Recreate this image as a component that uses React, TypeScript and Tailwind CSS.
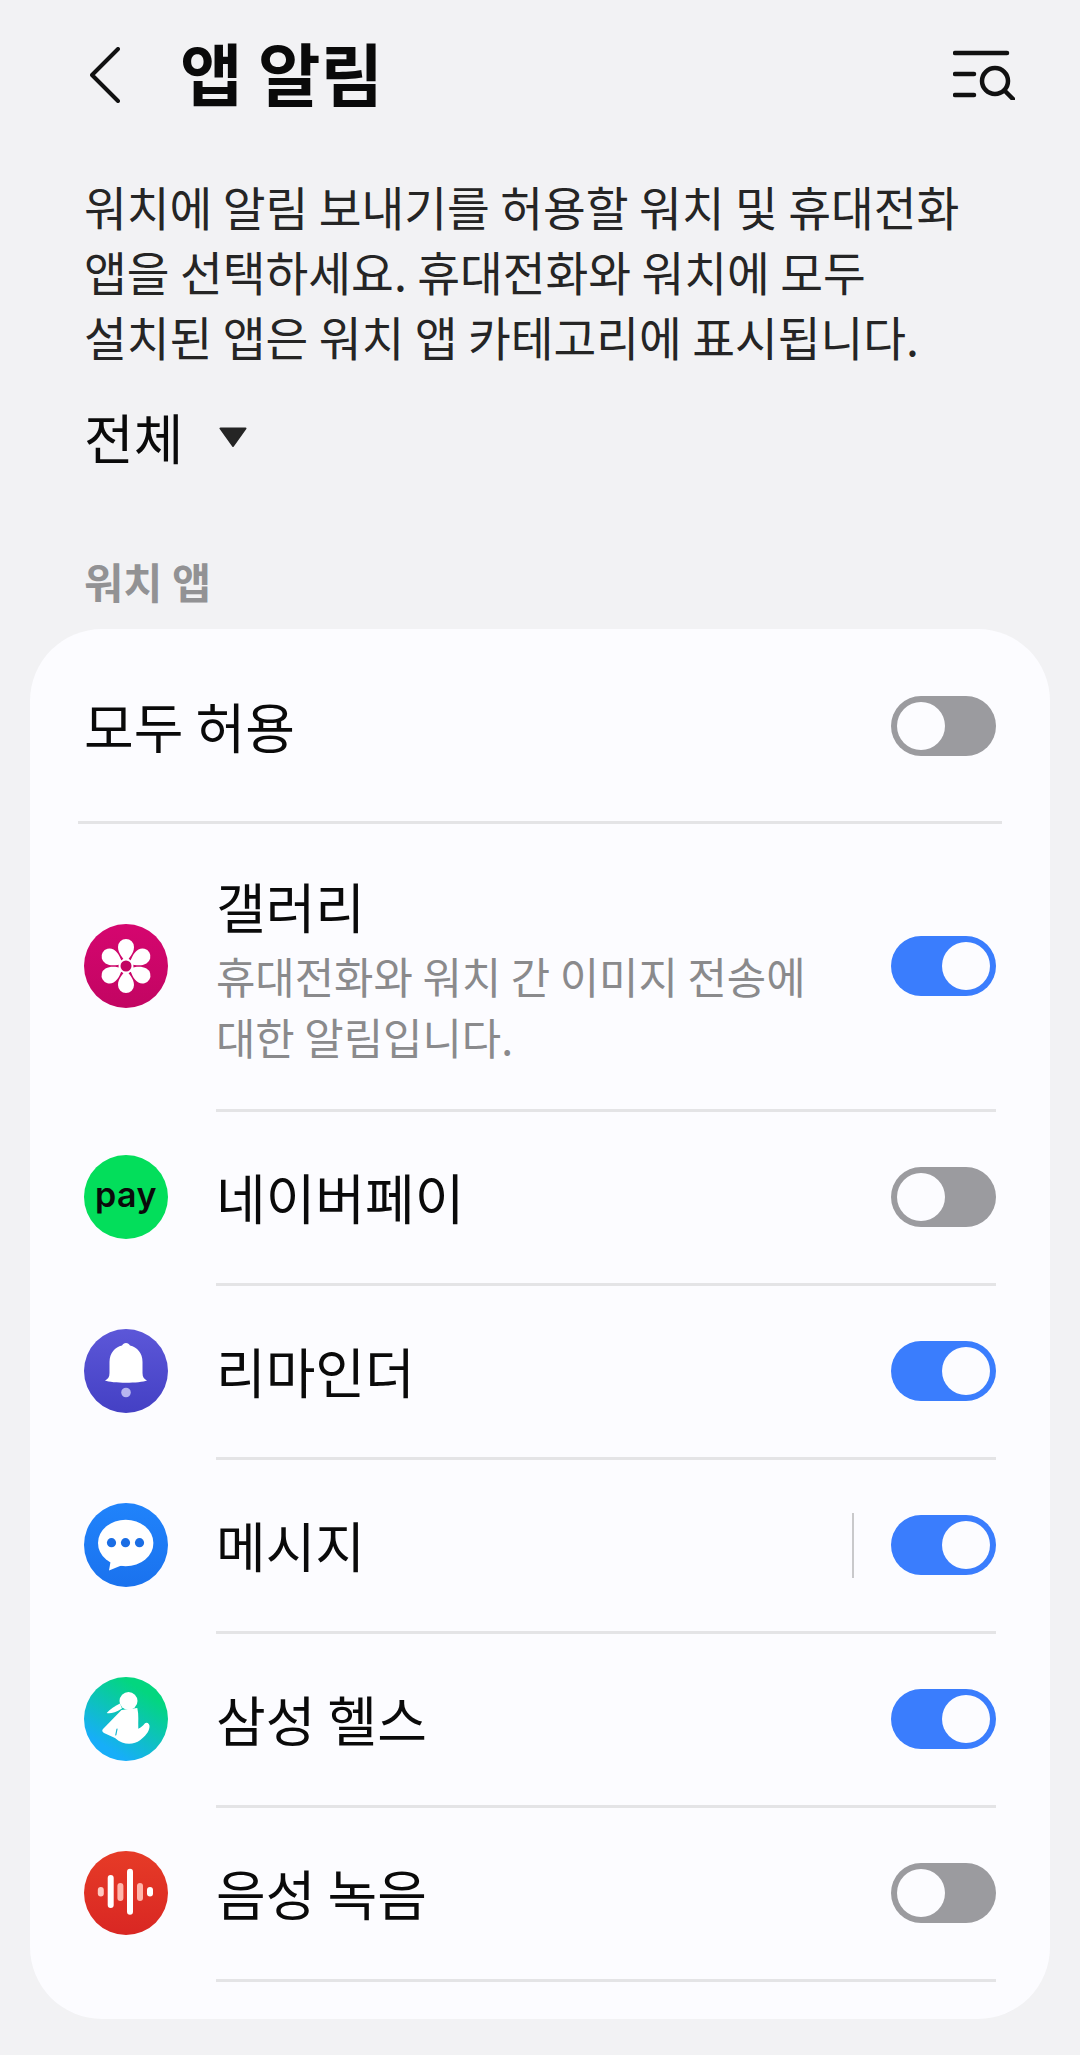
import React from "react";

function Toggle({ on }: { on: boolean }) {
  return (
    <div
      className={`flex h-[60px] w-[105px] shrink-0 items-center rounded-full p-[6px] ${
        on ? "justify-end bg-[#3a7dfd]" : "justify-start bg-[#9b9b9f]"
      }`}
    >
      <div className="h-[48px] w-[48px] rounded-full bg-[#fcfcff]" />
    </div>
  );
}

function GalleryIcon() {
  return (
    <svg viewBox="0 0 84 84" className="h-[84px] w-[84px]">
      <defs>
        <linearGradient id="gal" x1="0" y1="0" x2="0" y2="1">
          <stop offset="0" stopColor="#d5066f" />
          <stop offset="1" stopColor="#c20562" />
        </linearGradient>
      </defs>
      <circle cx="42" cy="42" r="42" fill="url(#gal)" />
      <g transform="translate(42 42)" fill="#fff">
        {[0, 60, 120, 180, 240, 300].map((a) => (
          <path
            key={a}
            transform={`rotate(${a})`}
            d="M0 -3 C-2.5 -8 -8 -12 -8 -19 A8 8 0 0 1 8 -19 C8 -12 2.5 -8 0 -3Z"
          />
        ))}
        <circle r="7.5" />
        <circle r="5.5" fill="#c20562" />
      </g>
    </svg>
  );
}

function PayIcon() {
  return (
    <div className="flex h-[84px] w-[84px] items-center justify-center rounded-full bg-[#03de5b]">
      <span className="pb-[4px] font-['Inter',sans-serif] text-[34px] font-semibold leading-none tracking-[0.5px] text-[#0a0a0a]">
        pay
      </span>
    </div>
  );
}

function BellIcon() {
  return (
    <svg viewBox="0 0 84 84" className="h-[84px] w-[84px]">
      <defs>
        <linearGradient id="bell" x1="0" y1="0" x2="0" y2="1">
          <stop offset="0" stopColor="#5c57d8" />
          <stop offset="1" stopColor="#4440c4" />
        </linearGradient>
      </defs>
      <circle cx="42" cy="42" r="42" fill="url(#bell)" />
      <path
        fill="#fff"
        d="M42 14c-2 0-3 1-4 2.5C31 18 25.5 24 25.5 33L25.5 44C25.5 48 24 50 21 51.5C28 54.5 56 54.5 63 51.5C60 50 58.5 48 58.5 44L58.5 33C58.5 24 53 18 46 16.5C45 15 44 14 42 14Z"
      />
      <circle cx="42" cy="63.5" r="4.8" fill="#b7b5f0" />
    </svg>
  );
}

function MessageIcon() {
  return (
    <svg viewBox="0 0 84 84" className="h-[84px] w-[84px]">
      <defs>
        <linearGradient id="msg" x1="0" y1="0" x2="0" y2="1">
          <stop offset="0" stopColor="#2083fb" />
          <stop offset="1" stopColor="#1a72ee" />
        </linearGradient>
      </defs>
      <circle cx="42" cy="42" r="42" fill="url(#msg)" />
      <ellipse cx="41.7" cy="40" rx="27.7" ry="23.2" fill="#fff" />
      <path d="M27 56 L25 67.5 L41 61Z" fill="#fff" />
      <g fill="#1a6de4">
        <circle cx="27.5" cy="39.7" r="4.6" />
        <circle cx="41.5" cy="39.7" r="4.6" />
        <circle cx="55.5" cy="39.7" r="4.6" />
      </g>
    </svg>
  );
}

function HealthIcon() {
  return (
    <svg viewBox="0 0 84 84" className="h-[84px] w-[84px]">
      <defs>
        <linearGradient id="health" x1="0.25" y1="0.95" x2="0.8" y2="0.1">
          <stop offset="0.1" stopColor="#17aef8" />
          <stop offset="0.9" stopColor="#03d67f" />
        </linearGradient>
      </defs>
      <circle cx="42" cy="42" r="42" fill="url(#health)" />
      <g fill="#fff">
        <circle cx="44.5" cy="24" r="9" />
        <path d="M36 26.5 C31 29 26 32 22.7 36 C25.5 37 31 36 38 31.5Z" />
        {/* torso and both arms */}
        <path d="M37.5 33 L53.3 31 C55 38 54 45 54.3 51.7 C57 50.5 59 49 60.5 46.8 C62.5 44.5 66 46.5 65.5 50 C65 55 61 59.5 56 63.3 C50 67.5 40 69 31 61 L20 56 C18 55 17.8 53 19 52 Z" />
      </g>
      <path d="M31.8 58 L33 52" stroke="#16b4cf" strokeWidth="1.2" strokeLinecap="round" />
    </svg>
  );
}

function VoiceIcon() {
  return (
    <svg viewBox="0 0 84 84" className="h-[84px] w-[84px]">
      <defs>
        <linearGradient id="voice" x1="0" y1="0" x2="0" y2="1">
          <stop offset="0" stopColor="#e63b27" />
          <stop offset="1" stopColor="#d92723" />
        </linearGradient>
      </defs>
      <circle cx="42" cy="42" r="42" fill="url(#voice)" />
      <rect x="13.8" y="36" width="6" height="9.5" rx="3" fill="#ffc9c0" />
      <rect x="23.7" y="24" width="6" height="33" rx="3" fill="#fff" />
      <rect x="33.4" y="32" width="6" height="18" rx="3" fill="#ffb6ab" />
      <rect x="43" y="17.7" width="6" height="46" rx="3" fill="#fff" />
      <rect x="53" y="32" width="6" height="18" rx="3" fill="#ffb6ab" />
      <rect x="63" y="36" width="6" height="9.5" rx="3" fill="#fff" />
    </svg>
  );
}

const apps = [
  { name: "네이버페이", icon: <PayIcon />, on: false },
  { name: "리마인더", icon: <BellIcon />, on: true },
  { name: "메시지", icon: <MessageIcon />, on: true, split: true },
  { name: "삼성 헬스", icon: <HealthIcon />, on: true },
  { name: "음성 녹음", icon: <VoiceIcon />, on: false },
];

export default function App() {
  return (
    <div className="min-h-screen bg-[#f2f2f4] font-['Noto_Sans_CJK_KR','Liberation_Sans',sans-serif] text-[#0a0a0a]">
      {/* top bar */}
      <div className="flex h-[150px] items-center pl-[90px] pr-[65px]">
        <svg viewBox="0 0 30 56" className="h-[56px] w-[30px]" fill="none" stroke="#111" strokeWidth="4" strokeLinecap="round" strokeLinejoin="round">
          <path d="M28 2 L2 28 L28 54" />
        </svg>
        <h1 className="ml-[60px] pb-[6px] text-[68px] font-bold leading-none">앱 알림</h1>
        <svg viewBox="0 0 62 50" className="ml-auto h-[50px] w-[62px]" fill="none" stroke="#111" strokeWidth="4.5" strokeLinecap="round">
          <path d="M2 3 H54" />
          <path d="M2 24 H21" />
          <path d="M2 45 H21" />
          <circle cx="42" cy="31" r="13" />
          <path d="M52 41 L60 49" />
        </svg>
      </div>

      <p className="ml-[84px] mt-[23px] whitespace-nowrap text-[46.5px] leading-[65px] text-[#252525]">
        워치에 알림 보내기를 허용할 워치 및 휴대전화
        <br />
        앱을 선택하세요. 휴대전화와 워치에 모두
        <br />
        설치된 앱은 워치 앱 카테고리에 표시됩니다.
      </p>

      <div className="ml-[84px] mt-[34px] flex h-[70px] items-center">
        <span className="text-[54px] leading-[70px]">전체</span>
        <svg viewBox="0 0 28 20" className="ml-[36px] h-[20px] w-[28px]">
          <path d="M1.5 1.5 H26.5 L14 19Z" fill="#252525" stroke="#252525" strokeWidth="2" strokeLinejoin="round" />
        </svg>
      </div>

      <div className="ml-[84px] mt-[79px] text-[42.6px] font-bold leading-[60px] text-[#929294]">워치 앱</div>

      {/* app list card; row dividers straddle the row boundary */}
      <div className="mx-[30px] mt-[18px] h-[1390px] rounded-[72px] bg-[#fcfcff]">
        <div className="mx-[48px] -mb-[2px] flex h-[195px] items-center justify-between border-b-[3px] border-[#e4e4e6] px-[6px] pt-[1px]">
          <span className="text-[54px] leading-none">모두 허용</span>
          <Toggle on={false} />
        </div>

        <div className="flex h-[288px] px-[54px]">
          <div className="self-center">
            <GalleryIcon />
          </div>
          <div className="-mb-[2px] ml-[48px] flex flex-1 items-center justify-between border-b-[3px] border-[#e4e4e6] pt-[1px]">
            <div className="pt-[8px]">
              <div className="text-[54px] leading-[66px]">갤러리</div>
              <div className="mt-[6px] text-[42.8px] leading-[61px] text-[#8a8a8c]">
                휴대전화와 워치 간 이미지 전송에
                <br />
                대한 알림입니다.
              </div>
            </div>
            <Toggle on={true} />
          </div>
        </div>

        {apps.map((app) => (
          <div key={app.name} className="flex h-[174px] px-[54px]">
            <div className="self-center">{app.icon}</div>
            <div className="-mb-[2px] ml-[48px] flex flex-1 items-center border-b-[3px] border-[#e4e4e6] pt-[1px]">
              <span className="text-[54px] leading-none">{app.name}</span>
              <div className="ml-auto flex items-center">
                {app.split && <div className="mr-[37px] h-[65px] w-[2px] bg-[#c9c9cb]" />}
                <Toggle on={app.on} />
              </div>
            </div>
          </div>
        ))}
      </div>
    </div>
  );
}
